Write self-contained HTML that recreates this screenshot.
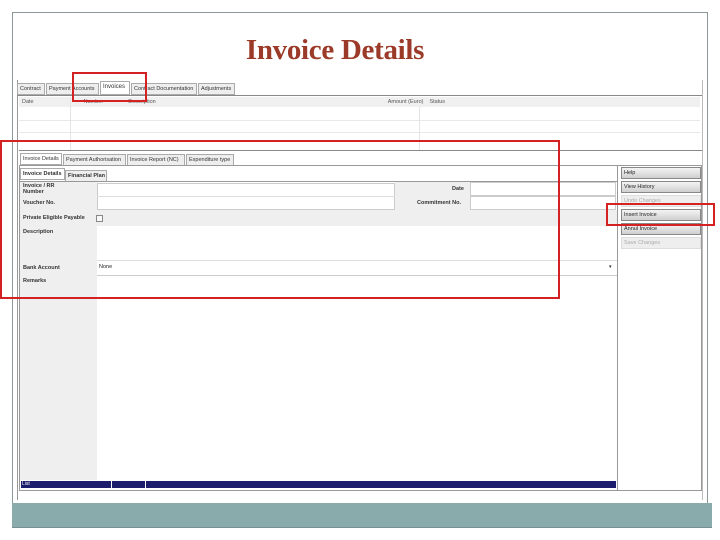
<!DOCTYPE html>
<html><head><meta charset="utf-8"><style>
*{box-sizing:border-box;margin:0;padding:0}
body{width:720px;height:540px;background:#fff;position:relative;overflow:hidden;font-family:"Liberation Sans",sans-serif;font-size:6px;color:#222}
.a{position:absolute}
.frame{left:12px;top:12px;width:696px;height:516px;border:1px solid #8a9a9a;border-bottom:none}
.title{left:0;width:670px;top:34px;text-align:center;font-family:"Liberation Serif",serif;font-size:29px;font-weight:bold;color:#9b3a28;letter-spacing:-0.3px}
.teal{left:12px;top:503px;width:700px;height:25px;background:#8aabab;border-bottom:1px solid #7a9090}
.tab{position:absolute;height:12px;border:1px solid #aaa;background:#eee;font-size:5.5px;line-height:10px;padding:0 2px;color:#333;white-space:nowrap;overflow:hidden}
.red{position:absolute;border:2px solid #d42222}
.btn{position:absolute;left:621px;width:80px;height:12px;border:1px solid #888;background:linear-gradient(#f4f4f4,#cfcfcf);font-size:5.5px;line-height:10px;padding-left:2px;color:#222}
.dis{background:#eee;color:#aaa;border-color:#ddd}
.lbl{position:absolute;left:23px;font-size:5.5px;font-weight:bold;color:#333}
.inp{position:absolute;background:#fff;border:1px solid #ccc}
</style></head><body>
<div class="a frame"></div>
<div class="a title">Invoice Details</div>
<div class="a" style="left:17px;top:80px;width:686px;height:420px;border-left:1px solid #999;border-right:1px solid #bbb"></div>
<div class="tab" style="left:17px;top:83px;width:28px">Contract</div>
<div class="tab" style="left:46px;top:83px;width:53px">Payment Accounts</div>
<div class="tab" style="left:100px;top:81px;width:30px;background:#fff;height:14px;font-size:6px">Invoices</div>
<div class="tab" style="left:131px;top:83px;width:66px">Contract Documentation</div>
<div class="tab" style="left:198px;top:83px;width:37px">Adjustments</div>
<div class="a" style="left:17px;top:95px;width:685px;height:1px;background:#888"></div>
<div class="a" style="left:19px;top:97px;width:681px;height:10px;background:#f0f0f0;font-size:5.5px;line-height:10px;color:#555"><span style="margin-left:3px">Date</span><span style="margin-left:50px">Number</span><span style="margin-left:25px">Description</span><span style="margin-left:232px">Amount (Euro)</span><span style="margin-left:6px">Status</span></div>
<div class="a" style="left:19px;top:120px;width:681px;height:1px;background:#e8e8e8"></div>
<div class="a" style="left:19px;top:132px;width:681px;height:1px;background:#e8e8e8"></div>
<div class="a" style="left:70px;top:97px;width:1px;height:53px;background:#e4e4e4"></div>
<div class="a" style="left:419px;top:107px;width:1px;height:43px;background:#e4e4e4"></div>
<div class="a" style="left:19px;top:150px;width:683px;height:1px;background:#888"></div>
<div class="tab" style="left:20px;top:153px;width:42px;background:#fff">Invoice Details</div>
<div class="tab" style="left:63px;top:154px;width:63px">Payment Authorisation</div>
<div class="tab" style="left:127px;top:154px;width:58px">Invoice Report (NC)</div>
<div class="tab" style="left:186px;top:154px;width:48px">Expenditure type</div>
<div class="a" style="left:19px;top:165px;width:683px;height:326px;border:1px solid #999"></div>
<div class="a" style="left:617px;top:165px;width:1px;height:326px;background:#999"></div>
<div class="tab" style="left:20px;top:168px;width:45px;background:#fff;font-weight:bold">Invoice Details</div>
<div class="tab" style="left:65px;top:170px;width:42px;font-weight:bold">Financial Plan</div>
<div class="a" style="left:20px;top:181px;width:597px;height:1px;background:#999"></div>
<div class="a" style="left:20px;top:182px;width:77px;height:298px;background:#efefef"></div>
<div class="a" style="left:20px;top:210px;width:597px;height:16px;background:#efefef"></div>
<div class="inp" style="left:97px;top:183px;width:298px;height:27px"></div>
<div class="a" style="left:97px;top:196px;width:298px;height:1px;background:#ddd"></div>
<div class="a" style="left:395px;top:182px;width:75px;height:28px;background:#efefef"></div>
<div class="inp" style="left:470px;top:182px;width:146px;height:14px"></div>
<div class="inp" style="left:470px;top:196px;width:146px;height:14px"></div>
<div class="lbl" style="top:183px">Invoice / RR<br>Number</div>
<div class="lbl" style="top:200px">Voucher No.</div>
<div class="lbl" style="top:215px">Private Eligible Payable</div>
<div class="a" style="left:96px;top:215px;width:7px;height:7px;border:1px solid #888;background:#f8f8f8"></div>
<div class="lbl" style="top:229px">Description</div>
<div class="lbl" style="top:265px">Bank Account</div>
<div class="lbl" style="top:278px">Remarks</div>
<div class="lbl" style="left:452px;top:186px">Date</div>
<div class="lbl" style="left:417px;top:200px">Commitment No.</div>
<div class="a" style="left:97px;top:260px;width:520px;height:1px;background:#ddd"></div>
<div class="a" style="left:97px;top:275px;width:520px;height:1px;background:#ccc"></div>
<div class="a" style="left:99px;top:264px;font-size:5.5px">None</div>
<div class="a" style="left:609px;top:264px;font-size:5px">▾</div>
<div class="a" style="left:20px;top:480px;width:597px;height:9px;background:#1c1c6c;border:1px solid #fff"></div>
<div class="a" style="left:111px;top:480px;width:1px;height:9px;background:#fff"></div>
<div class="a" style="left:145px;top:480px;width:1px;height:9px;background:#fff"></div>
<div class="a" style="left:22px;top:481px;font-size:5px;color:#fff">List</div>
<div class="btn" style="top:167px">Help</div>
<div class="btn" style="top:181px">View History</div>
<div class="btn dis" style="top:195px">Undo Changes</div>
<div class="btn" style="top:209px">Insert Invoice</div>
<div class="btn" style="top:223px">Annul Invoice</div>
<div class="btn dis" style="top:237px">Save Changes</div>
<div class="red" style="left:72px;top:72px;width:75px;height:30px"></div>
<div class="red" style="left:0px;top:140px;width:560px;height:159px"></div>
<div class="red" style="left:606px;top:203px;width:109px;height:23px"></div>
<div class="a teal"></div>
</body></html>
